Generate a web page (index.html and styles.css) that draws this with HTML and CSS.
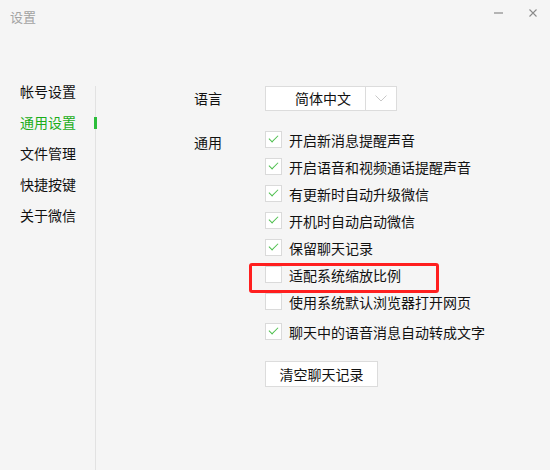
FILE: index.html
```html
<!DOCTYPE html>
<html>
<head>
  <meta charset="utf-8">
  <meta name="viewport" content="width=device-width">
  <title>设置</title>
  <link rel="stylesheet" href="styles.css">
</head>
<body>

  <div class="window">

    <header class="titlebar">
      <span class="title">设置</span>
      <div class="controls">
        <span class="btn-min"></span>
        <svg class="btn-close" width="8" height="8" viewBox="0 0 8 8">
          <path d="M0.5 0.5 L7.5 7.5 M7.5 0.5 L0.5 7.5" stroke="#8a8a8a" stroke-width="1.1" fill="none"/>
        </svg>
      </div>
    </header>

    <div class="main">

      <ul class="nav">
        <li>帐号设置</li>
        <li class="active">通用设置</li>
        <li>文件管理</li>
        <li>快捷按键</li>
        <li>关于微信</li>
      </ul>

      <section class="panel">

        <div class="field">
          <span class="label">语言</span>
          <div class="select">
            <span class="select-value">简体中文</span>
            <span class="select-arrow">
              <svg width="12" height="7" viewBox="0 0 12 7">
                <path d="M0.5 0.5 L6 6 L11.5 0.5" stroke="#c8c8c8" stroke-width="1" fill="none"/>
              </svg>
            </span>
          </div>
        </div>

        <div class="field general">
          <span class="label label-general">通用</span>
          <ul class="options">
            <li class="option checked"><span class="box"></span>开启新消息提醒声音</li>
            <li class="option checked"><span class="box"></span>开启语音和视频通话提醒声音</li>
            <li class="option checked"><span class="box"></span>有更新时自动升级微信</li>
            <li class="option checked"><span class="box"></span>开机时自动启动微信</li>
            <li class="option checked"><span class="box"></span>保留聊天记录</li>
            <li class="option highlighted"><span class="box"></span>适配系统缩放比例</li>
            <li class="option"><span class="box"></span>使用系统默认浏览器打开网页</li>
            <li class="option checked spaced"><span class="box"></span>聊天中的语音消息自动转成文字</li>
          </ul>
        </div>

        <button class="clear-btn">清空聊天记录</button>

      </section>
    </div>
  </div>

</body>
</html>
```

FILE: styles.css
```css
html, body {
  margin: 0;
  padding: 0;
  background: #f5f5f5;
  font-family: "Noto Sans CJK SC", "Noto Sans", sans-serif;
  color: #111;
}

.window {
  width: 550px;
  height: 470px;
  display: flex;
  flex-direction: column;
  overflow: hidden;
}

/* title bar */

.titlebar {
  height: 32px;
  display: flex;
  justify-content: space-between;
  align-items: flex-start;
  padding: 0 13px 0 10px;
  flex-shrink: 0;
}

.title {
  font-size: 13px;
  line-height: 14px;
  padding-top: 10px;
  color: #a3a3a3;
}

.controls {
  display: flex;
  align-items: center;
  gap: 26px;
  padding-top: 9px;
  height: 8px;
}

.btn-min {
  width: 9px;
  height: 2px;
  background: #b4b4b4;
}

.btn-close {
  display: block;
}

/* layout */

.main {
  flex: 1;
  display: flex;
}

.nav {
  list-style: none;
  margin: 0;
  padding: 44px 0 0 20px;
  width: 75px;
  flex-shrink: 0;
}

.nav li {
  position: relative;
  font-size: 14px;
  line-height: 31px;
  height: 31px;
  color: #111;
}

.nav li.active {
  color: #1aad19;
}

.nav li.active::after {
  content: "";
  position: absolute;
  right: -2px;
  top: 10px;
  width: 3px;
  height: 12px;
  background: #2bbd3a;
}

.panel {
  flex: 1;
  margin-top: 54px;
  border-left: 1px solid #e2e2e2;
  padding-left: 98px;
}

/* fields */

.field {
  display: flex;
  align-items: center;
}

.label {
  width: 71px;
  font-size: 14px;
  line-height: 25px;
  flex-shrink: 0;
}

.general {
  align-items: flex-start;
  margin-top: 16px;
}

.label-general {
  line-height: 31px;
}

.select {
  display: flex;
  width: 130px;
  height: 23px;
  background: #fff;
  border: 1px solid #dcdcdc;
}

.select-value {
  width: 100px;
  border-right: 1px solid #dcdcdc;
  font-size: 14px;
  line-height: 23px;
  padding-left: 29px;
  box-sizing: border-box;
}

.select-arrow {
  flex: 1;
  display: flex;
  align-items: center;
  justify-content: center;
}

.select-arrow svg {
  display: block;
}

/* options */

.options {
  list-style: none;
  margin: 0;
  padding: 0;
}

.option {
  position: relative;
  display: flex;
  align-items: center;
  gap: 7px;
  height: 27px;
  font-size: 14px;
  line-height: 29px;
  white-space: nowrap;
}

.option.spaced {
  margin-top: 3px;
}

.box {
  width: 15px;
  height: 15px;
  margin-top: -2px;
  background: #fff;
  border: 1px solid #dadada;
  flex-shrink: 0;
  position: relative;
}

.option.checked .box::after {
  content: "";
  position: absolute;
  left: 3px;
  top: 3px;
  width: 8px;
  height: 4px;
  border-left: 1px solid #4cbf4c;
  border-bottom: 1px solid #4cbf4c;
  transform: rotate(-45deg);
  transform-origin: center;
}

.option.highlighted::before {
  content: "";
  position: absolute;
  left: -16px;
  top: 1px;
  width: 184px;
  height: 24px;
  border: 3px solid #ff1f1f;
  border-radius: 3px;
}

/* button */

.clear-btn {
  display: block;
  margin: 15px 0 0 71px;
  width: 113px;
  height: 26px;
  background: #fff;
  border: 1px solid #dcdcdc;
  font-family: inherit;
  font-size: 14px;
  line-height: 24px;
  color: #111;
  padding: 0;
}
```
